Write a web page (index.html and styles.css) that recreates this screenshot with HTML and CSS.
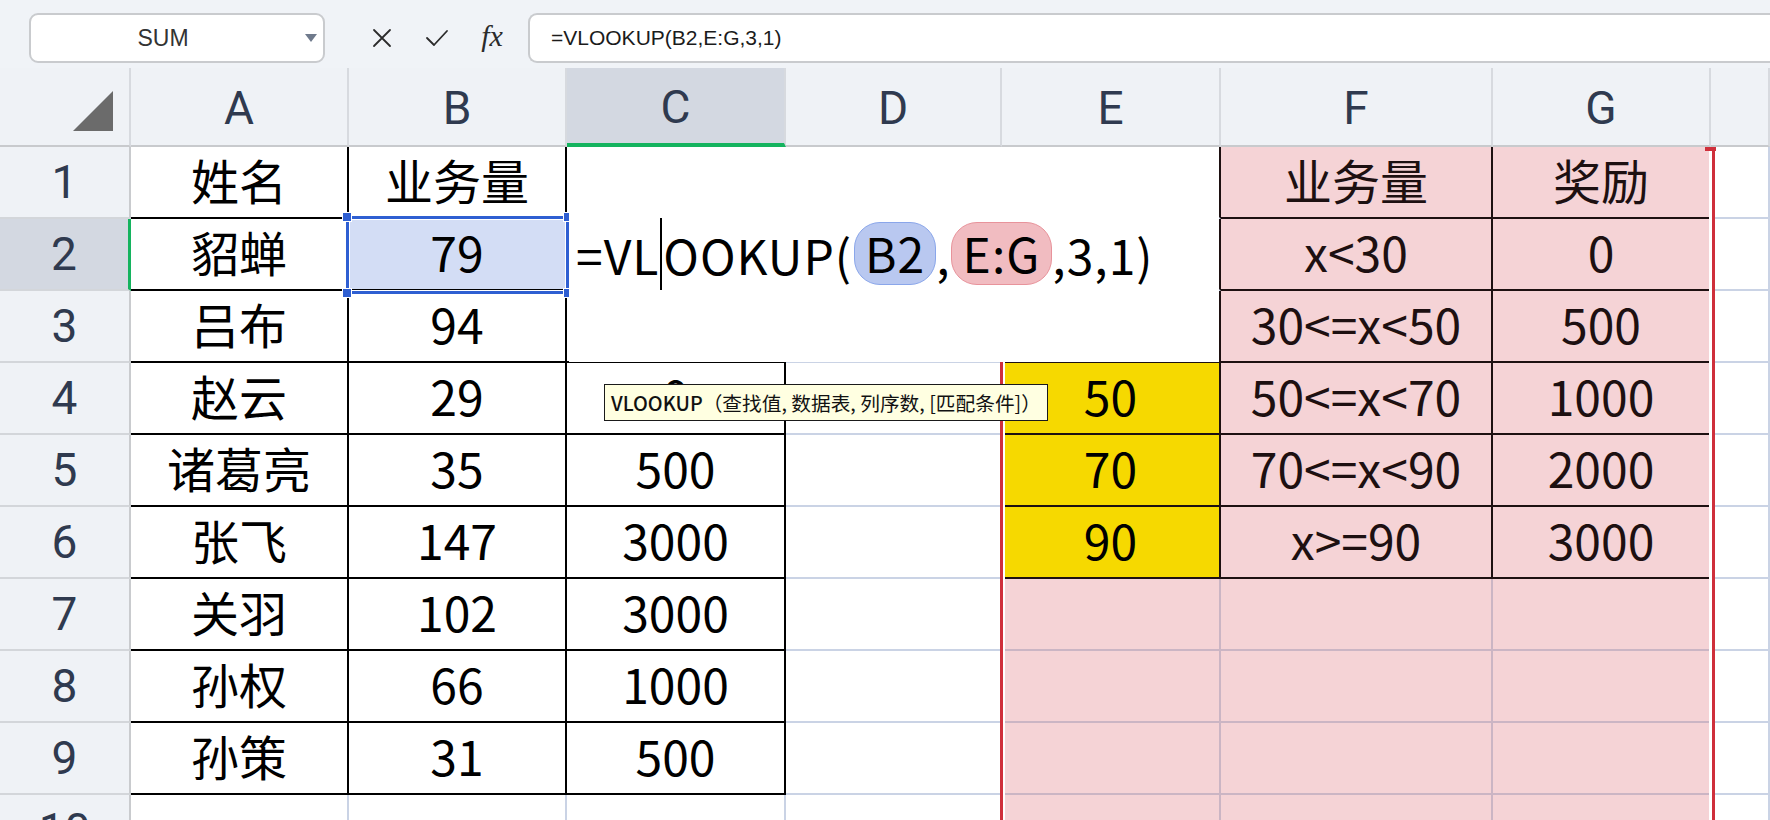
FILE: index.html
```html
<!DOCTYPE html>
<html lang="zh-CN">
<head>
<meta charset="utf-8">
<title>VLOOKUP</title>
<link rel="stylesheet" href="styles.css">
</head>
<body>
<div class="toolbar">
  <div class="namebox"><span class="namebox-text">SUM</span><span class="caret"></span></div>
  <div class="fx-icons">
    <span class="ico"><svg width="22" height="22" viewBox="0 0 22 22"><path d="M3 3 L19 19 M19 3 L3 19" stroke="#2b2b2b" stroke-width="1.8" fill="none" stroke-linecap="round"/></svg></span>
    <span class="ico"><svg width="24" height="20" viewBox="0 0 24 20"><path d="M2 10 L9 17 L22 3" stroke="#2b2b2b" stroke-width="1.8" fill="none" stroke-linecap="round" stroke-linejoin="round"/></svg></span>
    <span class="ico fx">fx</span>
  </div>
  <div class="formula-box">=VLOOKUP(B2,E:G,3,1)</div>
</div>

<div class="sheet">
  <!-- header row -->
  <div class="hc corner"><svg width="40" height="40" viewBox="0 0 40 40"><path d="M0 40 L40 0 L40 40 Z" fill="#6b6b6b"/></svg></div>
  <div class="hc">A</div>
  <div class="hc">B</div>
  <div class="hc hc-act">C</div>
  <div class="hc">D</div>
  <div class="hc">E</div>
  <div class="hc">F</div>
  <div class="hc">G</div>
  <div class="hc"></div>

  <!-- row 1 -->
  <div class="hr">1</div>
  <div class="c br bb">姓名</div>
  <div class="c br bb">业务量</div>
  <div class="c br"></div>
  <div class="c"></div>
  <div class="c dr"></div>
  <div class="c pk dr db">业务量</div>
  <div class="c pk db">奖励</div>
  <div class="c"></div>

  <!-- row 2 -->
  <div class="hr hr-act">2</div>
  <div class="c br bb">貂蝉</div>
  <div class="c br bb selfill">79</div>
  <div class="c br"></div>
  <div class="c"></div>
  <div class="c dr"></div>
  <div class="c pk dr db">x&lt;30</div>
  <div class="c pk db">0</div>
  <div class="c"></div>

  <!-- row 3 -->
  <div class="hr">3</div>
  <div class="c br bb">吕布</div>
  <div class="c br bb">94</div>
  <div class="c br bb"></div>
  <div class="c"></div>
  <div class="c dr db"></div>
  <div class="c pk dr db">30&lt;=x&lt;50</div>
  <div class="c pk db">500</div>
  <div class="c"></div>

  <!-- row 4 -->
  <div class="hr">4</div>
  <div class="c br bb">赵云</div>
  <div class="c br bb">29</div>
  <div class="c br bb">0</div>
  <div class="c"></div>
  <div class="c yl dr db">50</div>
  <div class="c pk dr db">50&lt;=x&lt;70</div>
  <div class="c pk db">1000</div>
  <div class="c"></div>

  <!-- row 5 -->
  <div class="hr">5</div>
  <div class="c br bb">诸葛亮</div>
  <div class="c br bb">35</div>
  <div class="c br bb">500</div>
  <div class="c"></div>
  <div class="c yl dr db">70</div>
  <div class="c pk dr db">70&lt;=x&lt;90</div>
  <div class="c pk db">2000</div>
  <div class="c"></div>

  <!-- row 6 -->
  <div class="hr">6</div>
  <div class="c br bb">张飞</div>
  <div class="c br bb">147</div>
  <div class="c br bb">3000</div>
  <div class="c"></div>
  <div class="c yl dr db">90</div>
  <div class="c pk dr db">x&gt;=90</div>
  <div class="c pk db">3000</div>
  <div class="c"></div>

  <!-- row 7 -->
  <div class="hr">7</div>
  <div class="c br bb">关羽</div>
  <div class="c br bb">102</div>
  <div class="c br bb">3000</div>
  <div class="c"></div>
  <div class="c pk pg"></div>
  <div class="c pk pg"></div>
  <div class="c pk pg"></div>
  <div class="c"></div>

  <!-- row 8 -->
  <div class="hr">8</div>
  <div class="c br bb">孙权</div>
  <div class="c br bb">66</div>
  <div class="c br bb">1000</div>
  <div class="c"></div>
  <div class="c pk pg"></div>
  <div class="c pk pg"></div>
  <div class="c pk pg"></div>
  <div class="c"></div>

  <!-- row 9 -->
  <div class="hr">9</div>
  <div class="c br bb">孙策</div>
  <div class="c br bb">31</div>
  <div class="c br bb">500</div>
  <div class="c"></div>
  <div class="c pk pg"></div>
  <div class="c pk pg"></div>
  <div class="c pk pg"></div>
  <div class="c"></div>

  <!-- row 10 -->
  <div class="hr">10</div>
  <div class="c"></div>
  <div class="c"></div>
  <div class="c"></div>
  <div class="c"></div>
  <div class="c pk pg"></div>
  <div class="c pk pg"></div>
  <div class="c pk pg"></div>
  <div class="c"></div>

  <!-- overlays -->
  <div class="range"><span class="range-tick"></span></div>

  <div class="sel">
    <span class="hd hd-tl"></span><span class="hd hd-tr"></span>
    <span class="hd hd-bl"></span><span class="hd hd-br"></span>
  </div>

  <div class="editor">
    <span>=VL</span><span class="cursor"></span><span>OOKUP(</span><span class="ref ref-b">B2</span><span>,</span><span class="ref ref-r">E:G</span><span>,3,1)</span>
  </div>

  <div class="tooltip"><span class="tip-fn">VLOOKUP</span>（查找值, 数据表, 列序数, [匹配条件]）</div>
</div>
</body>
</html>
```

FILE: styles.css
```css
* { box-sizing: border-box; }
html, body { margin: 0; padding: 0; }
body {
  width: 1770px;
  height: 820px;
  overflow: hidden;
  background: #ffffff;
  font-family: "Noto Sans CJK SC", "Noto Sans", sans-serif;
}

/* ---------- toolbar ---------- */
.toolbar {
  height: 68px;
  background: #f0f3f7;
  display: flex;
  align-items: flex-start;
  padding: 13px 0 0 29px;
}
.namebox {
  width: 296px;
  height: 50px;
  background: #fff;
  border: 2px solid #c9cbce;
  border-radius: 9px;
  display: flex;
  align-items: center;
}
.namebox-text {
  flex: 1;
  text-align: center;
  padding-right: 10px;
  font: 23px "Liberation Sans", Arial, sans-serif;
  color: #333;
}
.caret {
  width: 0;
  height: 0;
  border-left: 6px solid transparent;
  border-right: 6px solid transparent;
  border-top: 8px solid #6f7a8c;
  margin-right: 6px;
}
.fx-icons {
  display: flex;
  align-items: center;
  height: 50px;
  margin-left: 37px;
  gap: 15px;
}
.ico {
  width: 40px;
  height: 40px;
  display: flex;
  align-items: center;
  justify-content: center;
}
.fx {
  font: italic 30px "Liberation Serif", "DejaVu Serif", serif;
  color: #2b2b2b;
  padding-bottom: 4px;
}
.formula-box {
  flex: 1;
  height: 50px;
  margin-left: 16px;
  background: #fff;
  border: 2px solid #c9cbce;
  border-right: 0;
  border-radius: 9px 0 0 9px;
  display: flex;
  align-items: center;
  padding-left: 21px;
  font: 21px "Liberation Sans", Arial, sans-serif;
  color: #1b1b1b;
}

/* ---------- sheet ---------- */
.sheet {
  position: relative;
  display: grid;
  grid-template-columns: 131px 218px 218px 219px 216px 219px 272px 218px 59px;
  grid-template-rows: 79px repeat(10, 72px);
}
.hc {
  background: #eff2f6;
  border-right: 2px solid #d7dadf;
  border-bottom: 2px solid #c8cacd;
  display: flex;
  align-items: center;
  justify-content: center;
  font: 46px Roboto, "Liberation Sans", sans-serif;
  color: #2f3a4f;
  padding-top: 2px;
}
.hc.corner {
  display: block;
  padding: 20px 0 0 73px;
}
.hc-act {
  background: #d3d8e1;
  border-bottom: 4px solid #14b35e;
}
.hr {
  background: #eff2f6;
  border-right: 2px solid #c9cbce;
  border-bottom: 2px solid #d3d6da;
  display: flex;
  align-items: center;
  justify-content: center;
  font: 46px Roboto, "Liberation Sans", sans-serif;
  color: #2f3a4f;
}
.hr-act {
  background: #d3d8e1;
  border-right: 3px solid #14b35e;
}
.c {
  border-right: 2px solid #cad3e5;
  border-bottom: 2px solid #cad3e5;
  display: flex;
  align-items: center;
  justify-content: center;
  font-size: 48px;
  line-height: 1;
  color: #000;
  white-space: nowrap;
  padding-bottom: 6px;
}
.br { border-right-color: #000; }
.bb { border-bottom-color: #000; }
.dr { border-right-color: #1d1011; }
.db { border-bottom-color: #1d1011; }
.pk { background: #f5d3d6; color: #1d1011; }
.pg { border-right-color: #cbb5c4; border-bottom-color: #cbb5c4; }
.yl { background: #f6d900; }
.selfill { background: #d3ddf5; }

/* range highlight E:G */
.range {
  position: absolute;
  left: 1000px;
  top: 79px;
  width: 715px;
  height: 700px;
  border-left: 3px solid #cf2f3b;
  border-right: 3px solid #cf2f3b;
  box-shadow: inset 2px 0 0 #fff, inset -3px 0 0 #fff;
  pointer-events: none;
}
.range-tick {
  position: absolute;
  right: -4px;
  top: 0;
  width: 11px;
  height: 4px;
  background: #cf2f3b;
}

/* selection B2 */
.sel {
  position: absolute;
  left: 346px;
  top: 148px;
  width: 223px;
  height: 78px;
  border: 3px solid #2f5fd2;
  box-shadow: inset 0 0 0 1px #fff;
  pointer-events: none;
}
.hd {
  position: absolute;
  width: 10px;
  height: 10px;
  background: #2f5fd2;
  border: 1px solid #fff;
}
.hd-tl { left: -7px; top: -7px; }
.hd-tr { right: -7px; top: -7px; }
.hd-bl { left: -7px; bottom: -7px; }
.hd-br { right: -7px; bottom: -7px; }

/* in-cell editor */
.editor {
  position: absolute;
  left: 569px;
  top: 79px;
  width: 650px;
  height: 215px;
  background: #fff;
  display: flex;
  align-items: center;
  padding-left: 7px;
  padding-bottom: 2px;
  font-size: 48px;
  letter-spacing: 1px;
  line-height: 1;
  color: #000;
  white-space: nowrap;
}
.cursor {
  width: 2px;
  height: 72px;
  background: #000;
  margin: 0 1px;
}
.ref {
  display: inline-flex;
  align-items: center;
  height: 63px;
  padding: 0 10px 4px;
  border-radius: 26px;
}
.ref-b { background: #b9c8f0; border: 1px solid #8aa6ea; margin-left: 2px; }
.ref-r { background: #f1bcc1; border: 1px solid #e8939b; margin-left: 0; padding: 0 11px 4px; }

/* tooltip */
.tooltip {
  position: absolute;
  left: 604px;
  top: 316px;
  height: 37px;
  padding: 0 6px;
  background: #ffffe1;
  border: 1px solid #1a1a1a;
  display: flex;
  align-items: center;
  font-size: 19.7px;
  color: #111;
  white-space: nowrap;
}
.tip-fn { font-weight: 500; }
```
